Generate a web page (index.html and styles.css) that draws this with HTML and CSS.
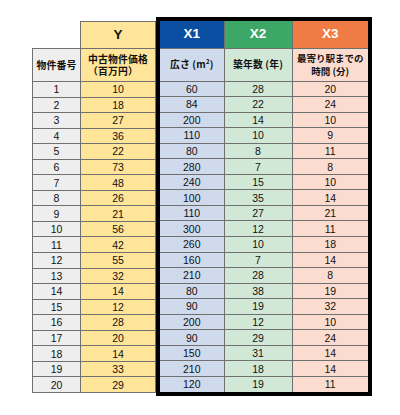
FILE: index.html
```html
<!DOCTYPE html>
<html lang="ja">
<head>
<meta charset="utf-8">
<link rel="stylesheet" href="styles.css">
</head>
<body>
<div class="sheet">
  <table class="left">
    <colgroup><col class="c-id"><col class="c-y"></colgroup>
    <tr class="r-title"><td class="blank"></td><td class="y-title">Y</td></tr>
    <tr class="r-head"><td class="id jp">物件番号</td><td class="y jp"><span class="stack">中古物件価格<br>（百万円）</span></td></tr>
    <tr><td class="id">1</td><td class="y">10</td></tr>
    <tr><td class="id">2</td><td class="y">18</td></tr>
    <tr><td class="id">3</td><td class="y">27</td></tr>
    <tr><td class="id">4</td><td class="y">36</td></tr>
    <tr><td class="id">5</td><td class="y">22</td></tr>
    <tr><td class="id">6</td><td class="y">73</td></tr>
    <tr><td class="id">7</td><td class="y">48</td></tr>
    <tr><td class="id">8</td><td class="y">26</td></tr>
    <tr><td class="id">9</td><td class="y">21</td></tr>
    <tr><td class="id">10</td><td class="y">56</td></tr>
    <tr><td class="id">11</td><td class="y">42</td></tr>
    <tr><td class="id">12</td><td class="y">55</td></tr>
    <tr><td class="id">13</td><td class="y">32</td></tr>
    <tr><td class="id">14</td><td class="y">14</td></tr>
    <tr><td class="id">15</td><td class="y">12</td></tr>
    <tr><td class="id">16</td><td class="y">28</td></tr>
    <tr><td class="id">17</td><td class="y">20</td></tr>
    <tr><td class="id">18</td><td class="y">14</td></tr>
    <tr><td class="id">19</td><td class="y">33</td></tr>
    <tr><td class="id">20</td><td class="y">29</td></tr>
  </table>
  <div class="xbox">
    <table class="right">
      <colgroup><col class="c-x1"><col class="c-x2"><col class="c-x3"></colgroup>
      <tr class="r-title"><td class="x1-title">X1</td><td class="x2-title">X2</td><td class="x3-title">X3</td></tr>
      <tr class="r-head"><td class="x1 jp">広さ (m<sup>2</sup>)</td><td class="x2 jp">築年数 (年)</td><td class="x3 jp narrow">最寄り駅までの<br>時間 (分)</td></tr>
      <tr><td class="x1">60</td><td class="x2">28</td><td class="x3">20</td></tr>
      <tr><td class="x1">84</td><td class="x2">22</td><td class="x3">24</td></tr>
      <tr><td class="x1">200</td><td class="x2">14</td><td class="x3">10</td></tr>
      <tr><td class="x1">110</td><td class="x2">10</td><td class="x3">9</td></tr>
      <tr><td class="x1">80</td><td class="x2">8</td><td class="x3">11</td></tr>
      <tr><td class="x1">280</td><td class="x2">7</td><td class="x3">8</td></tr>
      <tr><td class="x1">240</td><td class="x2">15</td><td class="x3">10</td></tr>
      <tr><td class="x1">100</td><td class="x2">35</td><td class="x3">14</td></tr>
      <tr><td class="x1">110</td><td class="x2">27</td><td class="x3">21</td></tr>
      <tr><td class="x1">300</td><td class="x2">12</td><td class="x3">11</td></tr>
      <tr><td class="x1">260</td><td class="x2">10</td><td class="x3">18</td></tr>
      <tr><td class="x1">160</td><td class="x2">7</td><td class="x3">14</td></tr>
      <tr><td class="x1">210</td><td class="x2">28</td><td class="x3">8</td></tr>
      <tr><td class="x1">80</td><td class="x2">38</td><td class="x3">19</td></tr>
      <tr><td class="x1">90</td><td class="x2">19</td><td class="x3">32</td></tr>
      <tr><td class="x1">200</td><td class="x2">12</td><td class="x3">10</td></tr>
      <tr><td class="x1">90</td><td class="x2">29</td><td class="x3">24</td></tr>
      <tr><td class="x1">150</td><td class="x2">31</td><td class="x3">14</td></tr>
      <tr><td class="x1">210</td><td class="x2">18</td><td class="x3">14</td></tr>
      <tr><td class="x1">120</td><td class="x2">19</td><td class="x3">11</td></tr>
    </table>
  </div>
</div>
</body>
</html>
```

FILE: styles.css
```css
html, body {
  margin: 0;
  padding: 0;
  background: #ffffff;
}
.sheet {
  display: flex;
  align-items: flex-start;
  padding: 17px 0 0 32px;
  font-family: "Liberation Sans", Arial, "Noto Sans CJK JP", sans-serif;
  color: #111111;
}
table {
  border-collapse: collapse;
  table-layout: fixed;
  border-spacing: 0;
}
td {
  padding: 0;
  text-align: center;
  vertical-align: middle;
  border: 1px solid #707070;
  font-size: 10.5px;
  line-height: 12px;
  white-space: nowrap;
  overflow: hidden;
}
tr { height: 15.55px; }
tr.r-title { height: 27px; }
tr.r-head { height: 33px; }
.left {
  margin-top: 4px;
  width: 123px;
}
.c-id { width: 48px; }
.c-y { width: 75px; }
.c-x1 { width: 64px; }
.c-x2 { width: 68px; }
.c-x3 { width: 76px; }
td.blank { border: none; background: transparent; }
.id { background: #eeeeee; }
.y, .y-title { background: #ffe599; }
.y-title, .x1-title, .x2-title, .x3-title {
  font-size: 13.5px;
  font-weight: bold;
}
.x1-title { background: #0b4fa2; color: #ffffff; }
.x2-title { background: #3ca766; color: #ffffff; }
.x3-title { background: #ef7b45; color: #ffffff; }
.x1 { background: #cfdaed; }
.x2 { background: #d1e8d7; }
.x3 { background: #fcdccf; }
.jp {
  font-family: "Noto Sans CJK JP", sans-serif;
  font-size: 9.8px;
  font-weight: bold;
  line-height: 12.5px;
  letter-spacing: 0.2px;
}
.jp.narrow { font-size: 9.5px; letter-spacing: 0; }
.stack {
  display: inline-block;
  text-align: left;
}
.jp sup {
  font-size: 6px;
  line-height: 0;
  vertical-align: 4px;
}
.xbox {
  border: 4px solid #000000;
}
.right {
  width: 208px;
  border-style: hidden;
}
```
